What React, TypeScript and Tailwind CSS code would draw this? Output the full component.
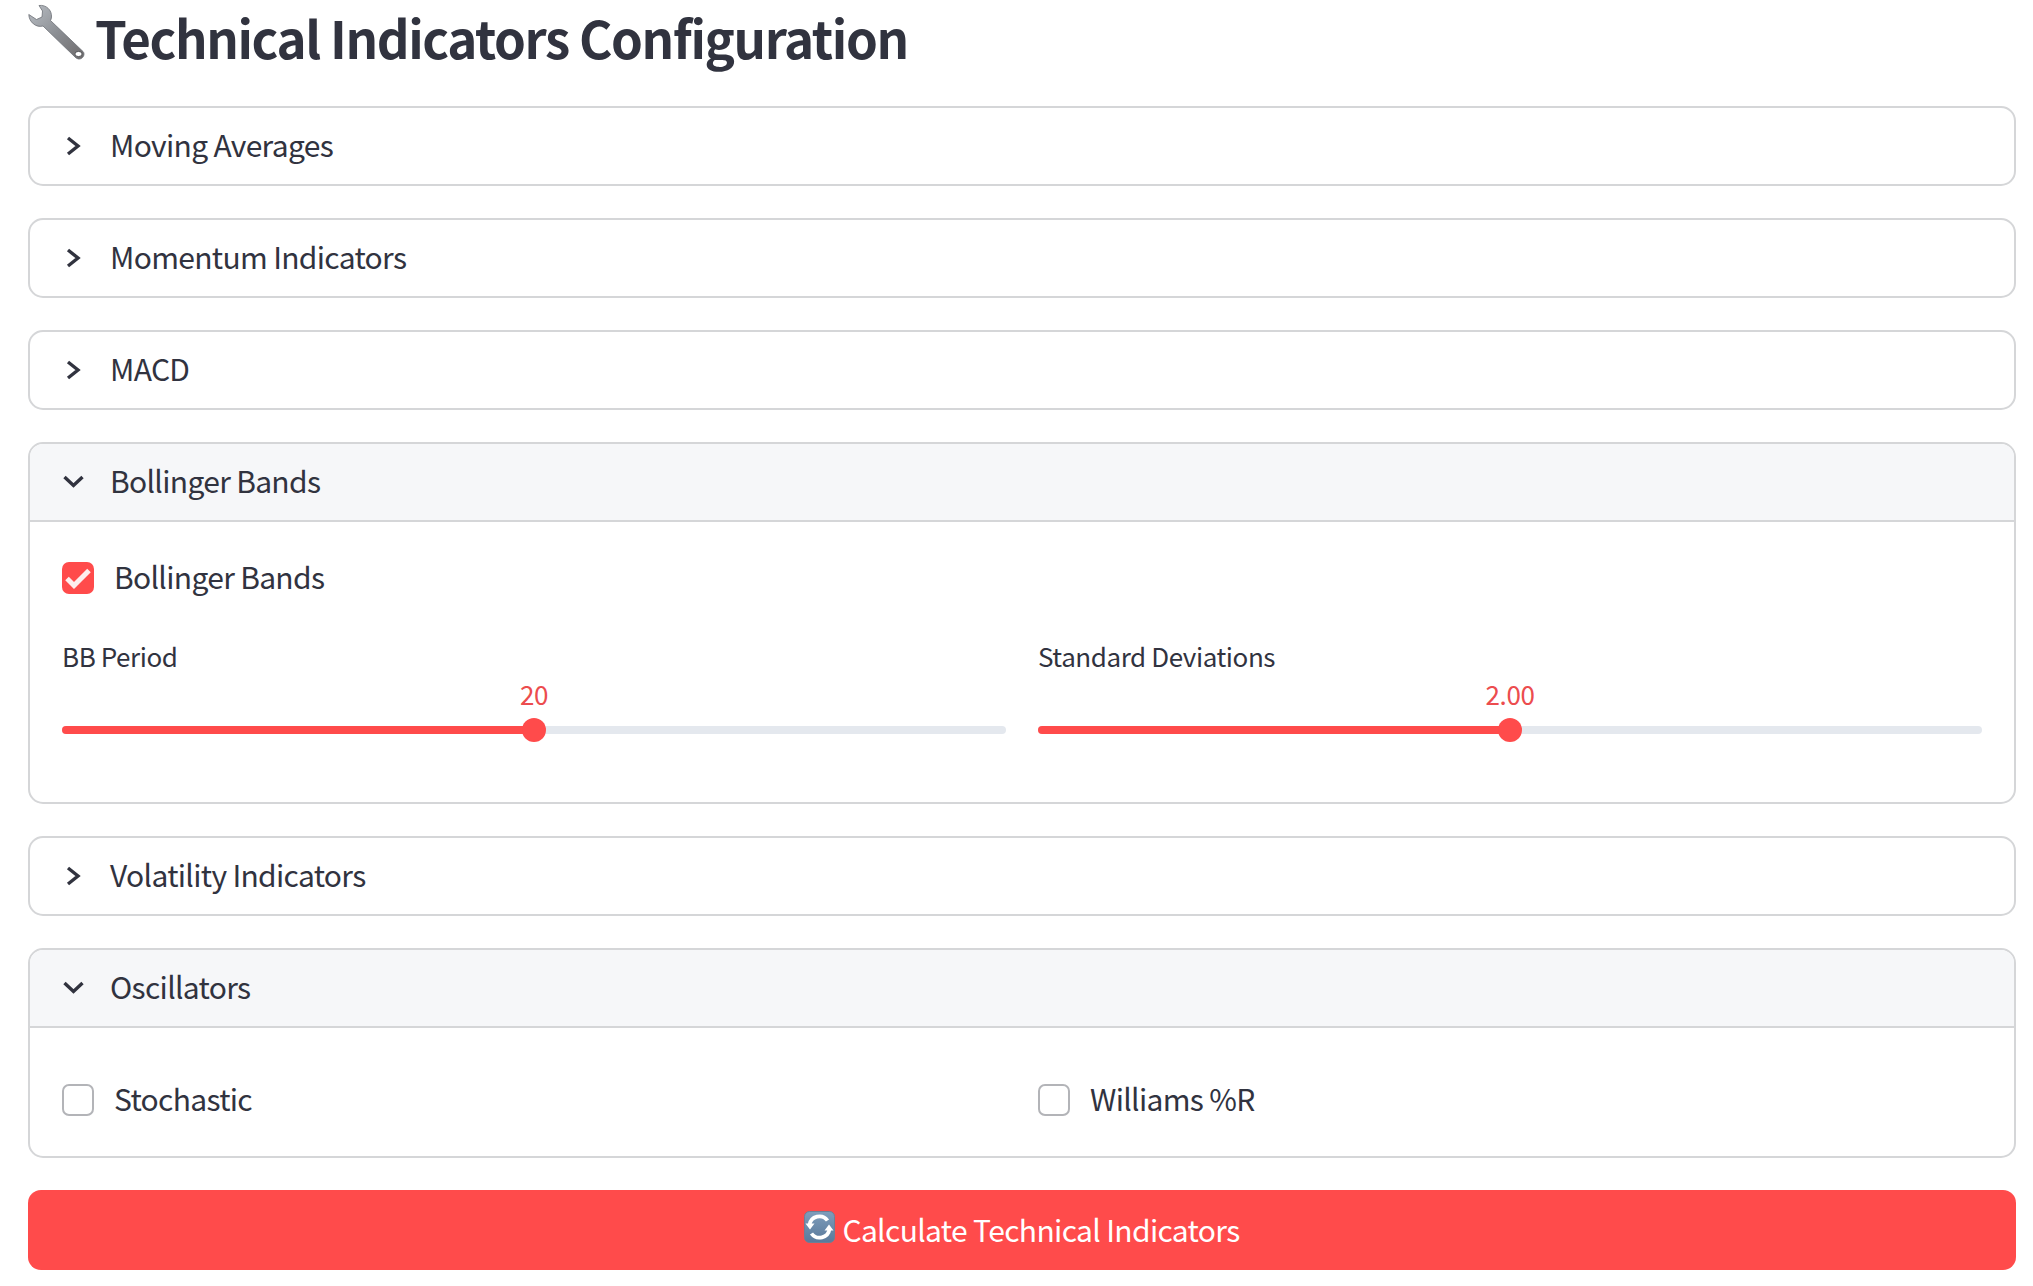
import React from "react";

function Chevron({ open }: { open?: boolean }) {
  return (
    <svg width="24" height="24" viewBox="0 0 24 24" fill="none" stroke="#31333F" strokeWidth="3.4" className="shrink-0">
      {open ? <path d="M3.5 7 L12.5 15.5 L21.5 7" /> : <path d="M7 4 L17 12 L7 20" />}
    </svg>
  );
}

function Header({ title, open }: { title: string; open?: boolean }) {
  return (
    <div className={`flex items-center pl-[31px] ${open ? "h-[78px] border-b-2 border-[#d5d6d8] bg-[#f6f7f9]" : "h-[76px]"}`}>
      <Chevron open={open} />
      <span className="ml-[25px] pb-[4px] text-[30px] leading-[40px] tracking-[-0.68px] text-[#31333f]">{title}</span>
    </div>
  );
}

function Card({ title, open, children }: { title: string; open?: boolean; children?: React.ReactNode }) {
  return (
    <div className="overflow-hidden rounded-[15px] border-2 border-[#d5d6d8] bg-white">
      <Header title={title} open={open} />
      {children}
    </div>
  );
}

function Check({ label, checked }: { label: string; checked?: boolean }) {
  return (
    <div className="flex items-center">
      <div className={`flex h-[32px] w-[32px] items-center justify-center rounded-[7px] ${checked ? "bg-[#ff4b4b]" : "border-2 border-[#b3b4b8] bg-white"}`}>
        {checked && (
          <svg width="32" height="32" viewBox="0 0 32 32" fill="none" stroke="#fdeeee" strokeWidth="5">
            <path d="M5 16.5 L12 23.5 L27 8.5" />
          </svg>
        )}
      </div>
      <span className="ml-[20px] pb-[4px] text-[30px] leading-[40px] tracking-[-0.68px] text-[#31333f]">{label}</span>
    </div>
  );
}

function Slider({ label, value }: { label: string; value: string }) {
  return (
    <div>
      <div className="text-[26px] leading-[36px] tracking-[-0.42px] text-[#31333f]">{label}</div>
      <div className="mt-[2px] flex justify-center pb-[6px] text-[26px] leading-[36px] tracking-[-0.42px] text-[#ec4c4e]">{value}</div>
      <div className="relative h-[24px]">
        <div className="absolute left-0 right-0 top-[8px] flex h-[8px] overflow-hidden rounded-full bg-[#e4e8ee]">
          <div className="h-full w-1/2 bg-[#ff4b4b]" />
        </div>
        <div className="absolute left-1/2 top-0 h-[24px] w-[24px] -translate-x-1/2 rounded-full bg-[#ff4b4b]" />
      </div>
    </div>
  );
}

function Wrench() {
  return (
    <svg width="58" height="58" viewBox="0 0 58 58" className="shrink-0">
      <defs>
        <linearGradient id="w" x1="0" y1="0" x2="1" y2="1">
          <stop offset="0" stopColor="#b9bec4" />
          <stop offset="0.5" stopColor="#8c8f94" />
          <stop offset="1" stopColor="#6d6a6b" />
        </linearGradient>
      </defs>
      <path
        d="M11 3.5 C18 2.5 24 8 23.5 15 C23.4 16.5 23 17.5 22.5 18.5 L55 49.5 C57.5 52 55 57.5 50.5 57 C49 56.8 48 56 47 55 L15 24 C8 26 1 20 0.8 12.5 L8.5 17.5 L14 15 L14.5 9 Z"
        fill="url(#w)"
        stroke="#6b6f75"
        strokeWidth="0.8"
      />
      <ellipse cx="50.5" cy="52" rx="3.6" ry="2.6" fill="#fff" stroke="#55565a" />
    </svg>
  );
}

function Refresh() {
  return (
    <svg width="31" height="32" viewBox="0 0 31 32" className="shrink-0 -translate-y-[3px]">
      <defs>
        <linearGradient id="r" x1="0" y1="0" x2="0" y2="1">
          <stop offset="0" stopColor="#7f9dbb" />
          <stop offset="1" stopColor="#59799b" />
        </linearGradient>
      </defs>
      <rect x="0.5" y="0.5" width="30" height="31" rx="5" fill="url(#r)" stroke="#6e7f96" />
      <g fill="none" stroke="#fff" strokeWidth="3.8">
        <path d="M5.5 14 A10 10 0 0 1 23.5 9.5" />
        <path d="M25.5 18 A10 10 0 0 1 7.5 22.5" />
      </g>
      <path d="M1.5 12.5 L10.5 12.5 L6 18.5 Z M20.5 19.5 L29.5 19.5 L25 13.5 Z" fill="#fff" />
    </svg>
  );
}

export default function App() {
  return (
    <div className="min-h-[1286px] w-full bg-white pl-[28px] pt-[2px] font-['Noto_Sans_CJK_SC','Source_Sans_Pro',sans-serif] antialiased">
      <div className="w-[1988px]">
        <div className="flex h-[79px] items-start">
          <Wrench />
          <h1 className="ml-[9px] text-[51px] font-bold leading-[70px] tracking-[-1.4px] text-[#31333f]">Technical Indicators Configuration</h1>
        </div>
        <div className="mt-[25px] flex flex-col gap-[32px]">
          <Card title="Moving Averages" />
          <Card title="Momentum Indicators" />
          <Card title="MACD" />
          <Card title="Bollinger Bands" open>
            <div className="h-[280px] px-[32px] pt-[34px]">
              <Check label="Bollinger Bands" checked />
              <div className="mt-[38px] grid grid-cols-2 gap-[32px]">
                <Slider label="BB Period" value="20" />
                <Slider label="Standard Deviations" value="2.00" />
              </div>
            </div>
          </Card>
          <Card title="Volatility Indicators" />
          <Card title="Oscillators" open>
            <div className="grid h-[128px] grid-cols-2 items-start gap-[32px] px-[32px] pt-[50px]">
              <Check label="Stochastic" />
              <Check label="Williams %R" />
            </div>
          </Card>
          <button className="flex h-[80px] w-full items-center justify-center rounded-[13px] bg-[#ff4b4b] text-[30px] leading-[40px] tracking-[-0.65px] text-white">
            <Refresh />
            <span className="ml-[7px] pb-[2px]">Calculate Technical Indicators</span>
          </button>
        </div>
      </div>
    </div>
  );
}
